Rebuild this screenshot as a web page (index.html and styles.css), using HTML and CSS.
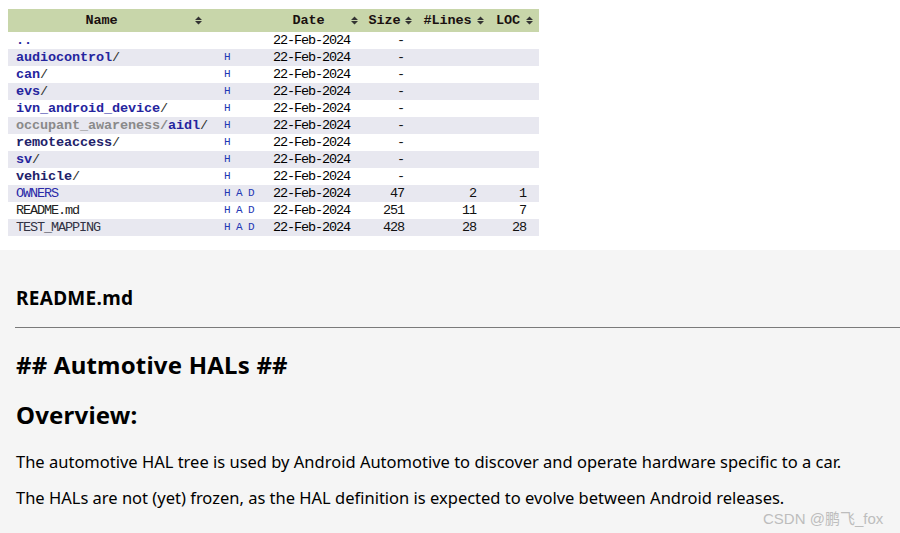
FILE: index.html
```html
<!DOCTYPE html>
<html>
<head>
<meta charset="utf-8">
<link rel="stylesheet" href="styles.css">
</head>
<body>
<div class="listing">
  <table class="files">
    <colgroup>
      <col class="c-name"><col class="c-had"><col class="c-date"><col class="c-size"><col class="c-lines"><col class="c-loc">
    </colgroup>
    <thead>
      <tr>
        <th><div class="th-in"><span class="lbl">Name</span><svg class="sort" viewBox="0 0 7 9" width="7" height="9"><path d="M0 4 L3.5 0.5 L7 4 Z M0 5 L7 5 L3.5 8.5 Z"/></svg></div></th>
        <th></th>
        <th><div class="th-in"><span class="lbl">Date</span><svg class="sort" viewBox="0 0 7 9" width="7" height="9"><path d="M0 4 L3.5 0.5 L7 4 Z M0 5 L7 5 L3.5 8.5 Z"/></svg></div></th>
        <th><div class="th-in"><span class="lbl">Size</span><svg class="sort" viewBox="0 0 7 9" width="7" height="9"><path d="M0 4 L3.5 0.5 L7 4 Z M0 5 L7 5 L3.5 8.5 Z"/></svg></div></th>
        <th><div class="th-in"><span class="lbl">#Lines</span><svg class="sort" viewBox="0 0 7 9" width="7" height="9"><path d="M0 4 L3.5 0.5 L7 4 Z M0 5 L7 5 L3.5 8.5 Z"/></svg></div></th>
        <th><div class="th-in"><span class="lbl">LOC</span><svg class="sort" viewBox="0 0 7 9" width="7" height="9"><path d="M0 4 L3.5 0.5 L7 4 Z M0 5 L7 5 L3.5 8.5 Z"/></svg></div></th>
      </tr>
    </thead>
    <tbody>
      <tr><td class="name"><a class="dir">..</a></td><td class="had"></td><td class="date">22-Feb-2024</td><td class="num">-</td><td class="num"></td><td class="num loc"></td></tr>
      <tr class="odd"><td class="name"><a class="dir">audiocontrol</a>/</td><td class="had">H</td><td class="date">22-Feb-2024</td><td class="num">-</td><td class="num"></td><td class="num loc"></td></tr>
      <tr><td class="name"><a class="dir">can</a>/</td><td class="had">H</td><td class="date">22-Feb-2024</td><td class="num">-</td><td class="num"></td><td class="num loc"></td></tr>
      <tr class="odd"><td class="name"><a class="dir">evs</a>/</td><td class="had">H</td><td class="date">22-Feb-2024</td><td class="num">-</td><td class="num"></td><td class="num loc"></td></tr>
      <tr><td class="name"><a class="dir">ivn_android_device</a>/</td><td class="had">H</td><td class="date">22-Feb-2024</td><td class="num">-</td><td class="num"></td><td class="num loc"></td></tr>
      <tr class="odd"><td class="name"><a class="dir muted">occupant_awareness/</a><a class="dir">aidl</a>/</td><td class="had">H</td><td class="date">22-Feb-2024</td><td class="num">-</td><td class="num"></td><td class="num loc"></td></tr>
      <tr><td class="name"><a class="dir dark">remoteaccess</a>/</td><td class="had">H</td><td class="date">22-Feb-2024</td><td class="num">-</td><td class="num"></td><td class="num loc"></td></tr>
      <tr class="odd"><td class="name"><a class="dir">sv</a>/</td><td class="had">H</td><td class="date">22-Feb-2024</td><td class="num">-</td><td class="num"></td><td class="num loc"></td></tr>
      <tr><td class="name"><a class="dir dark">vehicle</a>/</td><td class="had">H</td><td class="date">22-Feb-2024</td><td class="num">-</td><td class="num"></td><td class="num loc"></td></tr>
      <tr class="odd"><td class="name"><a class="file blue">OWNERS</a></td><td class="had">H A D</td><td class="date">22-Feb-2024</td><td class="num">47</td><td class="num">2</td><td class="num loc">1</td></tr>
      <tr><td class="name"><a class="file">README.md</a></td><td class="had">H A D</td><td class="date">22-Feb-2024</td><td class="num">251</td><td class="num">11</td><td class="num loc">7</td></tr>
      <tr class="odd"><td class="name"><a class="file gray">TEST_MAPPING</a></td><td class="had">H A D</td><td class="date">22-Feb-2024</td><td class="num">428</td><td class="num">28</td><td class="num loc">28</td></tr>
    </tbody>
  </table>
</div>
<div class="readme">
  <h3 class="readme-title">README.md</h3>
  <hr class="rule">
  <h2 class="md-h">## Autmotive HALs ##</h2>
  <h2 class="md-h overview">Overview:</h2>
  <p class="md-p first">The automotive HAL tree is used by Android Automotive to discover and operate hardware specific to a car.</p>
  <p class="md-p">The HALs are not (yet) frozen, as the HAL definition is expected to evolve between Android releases.</p>
</div>
<div class="watermark">CSDN @鹏飞_fox</div>
</body>
</html>
```

FILE: styles.css
```css
html, body {
  margin: 0;
  padding: 0;
  background: #ffffff;
  height: 100%;
  overflow: hidden;
}
body {
  position: relative;
  font-family: "Liberation Mono", "DejaVu Sans Mono", monospace;
}
.listing {
  padding: 9px 0 0 8px;
  height: 241px;
}
.files {
  border-collapse: collapse;
  table-layout: fixed;
  width: 531px;
  font-family: "Liberation Mono", "Noto Sans CJK SC", monospace;
  font-size: 13.5px;
  letter-spacing: -1.1px;
  color: #000;
}
.c-name { width: 200px; }
.c-had { width: 58px; }
.c-date { width: 98px; }
.c-size { width: 54px; }
.c-lines { width: 72px; }
.c-loc { width: 49px; }

.files thead tr {
  background: #c8d6aa;
  height: 23px;
}
.files th {
  padding: 0 6px 0 0;
  font-weight: bold;
  letter-spacing: -0.1px;
  color: #1a1010;
}
.th-in {
  display: flex;
  align-items: center;
}
.lbl {
  flex: 1;
  text-align: center;
}
.sort {
  fill: #333;
  flex: none;
}
.files tbody tr {
  height: 17px;
}
.files tbody tr.odd {
  background: #e8e8f0;
}
.files td {
  padding: 0;
  white-space: nowrap;
  line-height: 17px;
}
td.name {
  padding-left: 8px;
  color: #333;
}
.dir {
  font-weight: bold;
  letter-spacing: -0.1px;
  color: #25259e;
}
.dir.muted { color: #8a8a8a; }
.dir.dark { color: #22226a; }
.file { color: #222; }
.file.blue { color: #2a2aa8; }
.file.gray { color: #333344; }
td.had {
  padding-left: 16px;
  font-size: 11px;
  letter-spacing: -0.6px;
  color: #2236b4;
}
td.date {
  padding-left: 7px;
}
td.num {
  text-align: right;
  padding-right: 14px;
  color: #111;
}
td.num.loc { padding-right: 13px; }

.readme {
  background: #f5f5f5;
  padding: 36px 0 40px 15px;
  font-family: "Noto Sans", "Open Sans", sans-serif;
  color: #000;
}
.readme-title {
  margin: 0 0 17px 1px;
  font-size: 19px;
  line-height: 24px;
  font-weight: bold;
  letter-spacing: 0.3px;
}
.rule {
  margin: 0;
  border: 0;
  border-top: 1px solid #7a7a7a;
  height: 0;
}
.md-h {
  margin: 21px 0 0 1px;
  font-size: 24px;
  line-height: 32px;
  font-weight: bold;
  letter-spacing: 0.2px;
}
.md-h.overview {
  margin-top: 18px;
}
.md-p {
  margin: 16px 0 0 1px;
  font-size: 16.5px;
  line-height: 20px;
}
.md-p.first {
  margin-top: 21px;
}
.watermark {
  position: absolute;
  left: 763px;
  top: 507px;
  font-family: "Liberation Sans", "Noto Sans CJK SC", sans-serif;
  font-size: 15px;
  color: #bdbdbd;
}
```
